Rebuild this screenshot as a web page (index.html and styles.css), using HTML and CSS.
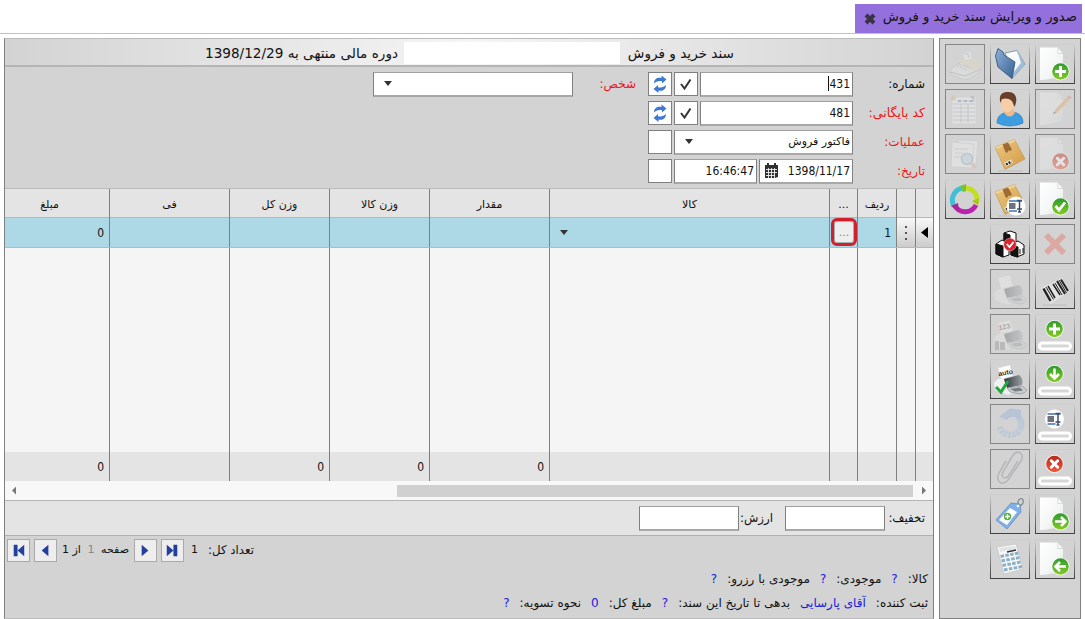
FILE: index.html
```html
<!DOCTYPE html>
<html lang="fa" dir="rtl">
<head>
<meta charset="utf-8">
<title>صدور و ویرایش سند خرید و فروش</title>
<link rel="stylesheet" href="styles.css">
</head>
<body>
<svg class="defs" aria-hidden="true">
  <defs>
    <linearGradient id="gPage" x1="0" y1="0" x2="1" y2="1"><stop offset="0" stop-color="#fff"/><stop offset=".6" stop-color="#f4f6f6"/><stop offset="1" stop-color="#d5d9da"/></linearGradient>
    <linearGradient id="gGreen" x1="0" y1="0" x2="0" y2="1"><stop offset="0" stop-color="#2f9a2f"/><stop offset="1" stop-color="#86cc25"/></linearGradient>
    <linearGradient id="gRed" x1="0" y1="0" x2="0" y2="1"><stop offset="0" stop-color="#b92a1e"/><stop offset="1" stop-color="#ee5a3c"/></linearGradient>
    <linearGradient id="gBlue" x1="0" y1="0" x2="1" y2="1"><stop offset="0" stop-color="#8fb2d8"/><stop offset="1" stop-color="#36608f"/></linearGradient>
    <linearGradient id="gBox" x1="0" y1="0" x2="1" y2="1"><stop offset="0" stop-color="#ecc884"/><stop offset="1" stop-color="#d29c45"/></linearGradient>
    <linearGradient id="gInk" x1="0" y1="0" x2="1" y2="0"><stop offset="0" stop-color="#30353b"/><stop offset="1" stop-color="#9aa0a5"/></linearGradient>
    <g id="page"><path d="M5 3.5H23L28 9V32Q20 35 5 36Z" fill="url(#gPage)"/><path d="M23 3.5V9.5H28Z" fill="#fff" stroke="#bfc3c4" stroke-width=".6"/></g>
    <g id="ok"><circle r="9" fill="#fff"/><circle r="8.3" fill="url(#gGreen)"/></g>
    <g id="no"><circle r="9" fill="#fff"/><circle r="8.3" fill="url(#gRed)"/><path d="M-3.2-3.2L3.2 3.2M3.2-3.2L-3.2 3.2" stroke="#fff" stroke-width="3" stroke-linecap="round"/></g>
    <g id="plus"><use href="#ok"/><path d="M0-5.5V5.5M-5.5 0H5.5" stroke="#fff" stroke-width="3"/></g>
    <g id="field"><rect x="4.500" y="29" width="31" height="6" rx="3" fill="#d6d6d6" stroke="#fff" stroke-width="3"/></g>
    <g id="clamp"><circle r="9.500" fill="#fff"/><rect x="-7" y="-3" width="6.500" height="6" fill="#6c7280"/><path d="M-7-5H6M-7 5H1" stroke="#6e93cc" stroke-width="2"/><path d="M3.5-6V6.500M1-5.500H6M1 3H6M2 6H5" stroke="#3b516f" stroke-width="1.500"/></g>
    <g id="box"><path d="M8 37H33" stroke="#bdbdbd"/><path d="M5 13L24.5 5.500L35 25L15 35.500Z" fill="url(#gBox)" stroke="#bb873a" stroke-width=".5"/><path d="M5 13L24.500 5.500L25.500 7.500L6.500 15Z" fill="#f0d295"/><path d="M12.500 10.500L18 8.500L22 15.500L20 17L18.500 16.500L17 19L15.500 18Z" fill="#9d6b33"/><path d="M14 29L21 25.500L23 28.500L16.500 32.500Z" fill="#f5f2ea"/><path d="M16 30.500L21.500 27.500" stroke="#292929" stroke-width="2.500" stroke-dasharray="2 1"/></g>
    <g id="printer"><path d="M4 24L8 20L15 19L27 27L25 33L18 36L5 31Z" fill="#f0f1f2"/><path d="M14 20L29 16Q34 20 32 26L17 29Q15 24 14 20Z" fill="url(#gInk)"/><path d="M17 29L32 27L37 31Q36 34 30 35L20 33Z" fill="#c9cdcf" stroke="#8d9397" stroke-width=".7"/><path d="M20 30L30 28.500L33 31.500L25 32.500Z" fill="#777e84"/><path d="M8 9L20 6L23 17L11 20Z" fill="#fff" stroke="#d5d5d5" stroke-width=".4"/></g>
    <g id="refresh" fill="#3f78d2"><path d="M1 8C1 3.500 4.500 1.500 8.500 2.500V0L13.500 4L9 8V5.800C5.500 5 3 6 1 8Z"/><path d="M13 9.500C13 14 9.500 16 5.500 15V17.500L.5 13.500L5 9.500V11.700C8.500 12.500 11 11.500 13 9.500Z"/></g>
  </defs>
</svg>

<header class="tabs"><div class="tab"><span>صدور و ویرایش سند خرید و فروش</span>
  <svg class="tab-close" viewBox="0 0 12 12"><path d="M2 2L10 10M10 2L2 10" stroke="#393345" stroke-width="4"/></svg></div></header>

<div class="workspace">
  <aside class="toolbar">
    <div class="tools">
      <button class="tool"><svg viewBox="0 0 40 40"><use href="#page"/><use href="#plus" x="25.500" y="27.500"/></svg></button>
      <button class="tool off"><svg viewBox="0 0 40 40"><use href="#page"/><path d="M18 25L20 21L32 8L35 10L22 24Z" fill="#e99a45"/><path d="M32 8L34 6L37 8.500L35 10Z" fill="#d46f6f"/><path d="M18 25L19 22.500L21 24Z" fill="#333"/></svg></button>
      <button class="tool off stop"><svg viewBox="0 0 40 40"><use href="#page" opacity=".7"/><use href="#no" x="25.500" y="27.500"/></svg></button>
      <button class="tool"><svg viewBox="0 0 40 40"><use href="#page"/><use href="#ok" x="25.500" y="27.500"/><path d="M20.500 27L24 31L30 23.500" fill="none" stroke="#fff" stroke-width="2.800"/></svg></button>
      <button class="tool off stop"><svg viewBox="0 0 40 40"><path d="M9 13L13 9L20 16L27 9L31 13L24 20L31 27L27 31L20 24L13 31L9 27L16 20Z" fill="#e86a60"/></svg></button>
      <button class="tool"><svg viewBox="0 0 40 40"><path d="M8 36H32" stroke="#bbb"/><path d="M6 19L27 9L34 23L15 35Z" fill="#e3e3e3"/><g stroke="#222"><path d="M8.500 19.500L15.500 32" stroke-width="2.500"/><path d="M11 18L18.500 30.500M20 14L27 26" stroke-width="1"/><path d="M13 17L20 29M18 15L25 26" stroke-width="1.500"/><path d="M22 12L30 25M26 10.500L33 22" stroke-width="2"/><path d="M24 11L31.500 24" stroke-width="1"/></g></svg></button>
      <button class="tool"><svg viewBox="0 0 40 40"><use href="#plus" x="19.500" y="15"/><use href="#field"/></svg></button>
      <button class="tool"><svg viewBox="0 0 40 40"><use href="#ok" x="19.500" y="15"/><path d="M19.500 9.500V19M15 15L19.500 19.500L24 15" fill="none" stroke="#fff" stroke-width="2.500"/><use href="#field"/></svg></button>
      <button class="tool"><svg viewBox="0 0 40 40"><use href="#clamp" x="19.500" y="15"/><use href="#field"/></svg></button>
      <button class="tool"><svg viewBox="0 0 40 40"><use href="#no" x="19.500" y="15"/><use href="#field"/></svg></button>
      <button class="tool"><svg viewBox="0 0 40 40"><use href="#page"/><use href="#ok" x="25.500" y="27.500"/><path d="M20 27.500H29M26 23L30.500 27.500L26 32" fill="none" stroke="#fff" stroke-width="2.600"/></svg></button>
      <button class="tool"><svg viewBox="0 0 40 40"><use href="#page"/><use href="#ok" x="25.500" y="27.500"/><path d="M31 27.500H22M25 23L20.500 27.500L25 32" fill="none" stroke="#fff" stroke-width="2.600"/></svg></button>
    </div>
    <div class="tools">
      <button class="tool"><svg viewBox="0 0 40 40"><path d="M15 9L27 6.500L35 20L22 34.500L19 18Z" fill="url(#gPage)" stroke="#64839f" stroke-width=".8"/><path d="M27 6.500L35 20L22 34.500L22 30L31 19Z" fill="#9fbcd9"/><path d="M5.500 12L8 4.500L13 8L14 11L25 18L22 34.500L8 23Z" fill="url(#gBlue)" stroke="#345780" stroke-width=".9"/></svg></button>
      <button class="tool"><svg viewBox="0 0 40 40"><path d="M7 34C7 26 13 24 17 23H23C29 24 33 27 33 34Q20 40 7 34Z" fill="#3d9de0" stroke="#2477b5" stroke-width=".6"/><path d="M15 20H23L25 24Q20 31 14 24Z" fill="#edb98d"/><ellipse cx="17.500" cy="14.500" rx="6.500" ry="9" fill="#f6cda5"/><path d="M10.500 14C8 5 13 3 18 3C27 3 28 11 24.500 18L22 12C19 9 15 9 12 10Z" fill="#66402c"/></svg></button>
      <button class="tool"><svg viewBox="0 0 40 40"><use href="#box"/></svg></button>
      <button class="tool"><svg viewBox="0 0 40 40"><use href="#box"/><use href="#clamp" x="26" y="27"/></svg></button>
      <button class="tool"><svg viewBox="0 0 40 40"><g stroke="#111" stroke-width="1" stroke-linejoin="round"><path d="M14 9L20 7L26 9V18L20 21L14 18Z" fill="#fff"/><path d="M14 9L20 11V21L14 18Z" fill="#111"/><path d="M6 20L12 16L19 20V31L13 33L6 30Z" fill="#fff"/><path d="M6 20L13 22V33L6 30Z" fill="#111"/><path d="M21 20L28 17L34 21V30L27 33L21 31Z" fill="#fff"/><path d="M21 20L28 23V33L21 31Z" fill="#111"/><path d="M30 25V30M33 24V29"/></g><circle cx="20" cy="20.500" r="6.300" fill="#db2631" stroke="#f7c2c4" stroke-width=".5"/><path d="M16.800 20L19.500 23L23.500 18" fill="none" stroke="#fff" stroke-width="1.800"/></svg></button>
      <button class="tool off"><svg viewBox="0 0 40 40"><use href="#printer"/></svg></button>
      <button class="tool off"><svg viewBox="0 0 40 40"><use href="#printer"/><text class="paper" x="9" y="16" transform="rotate(-10 10 16)">123</text><path d="M5 27H9V36H5ZM10 28H15V36H10Z" fill="#777"/></svg></button>
      <button class="tool"><svg viewBox="0 0 40 40"><use href="#printer"/><text class="paper" x="8.500" y="17" transform="rotate(-10 10 16)">auto</text><path d="M6 28L11 33L18 22" fill="none" stroke="#24a83a" stroke-width="3"/></svg></button>
      <button class="tool off"><svg viewBox="0 0 40 40"><path d="M28 12A11 11 0 1 1 9.500 22" fill="none" stroke="#8cb3e3" stroke-width="6.500" stroke-dasharray="15 1 4 1 3 1 3 1 3 1 3 1 3 1"/><path d="M9 13L20 4.500L31 6L31 17L25 13Q20 12 17 16Z" fill="#6f9fdf"/></svg></button>
      <button class="tool off"><svg viewBox="0 0 40 40"><path d="M16 12L9 24C5 32 12 38 18 31L31 12C35 5 28 0 23 6L13 23C10 29 16 31 19 26L28 12" fill="none" stroke="#666c72" stroke-width="1.500"/></svg></button>
      <button class="tool"><svg viewBox="0 0 40 40"><path d="M28 10C27 3 35 3 33 9Q31 13 27 12" fill="none" stroke="#858b8d" stroke-width="1.300"/><path d="M6 26L21 9L30 10L31 18L17 35Z" fill="#7fb0e8" stroke="#5381b7" stroke-width=".6"/><path d="M9 26L20 14L27 18L17 31Z" fill="#fff"/><circle cx="17.500" cy="22.500" r="3.700" fill="#53b13c"/><path d="M17.500 20V25M15 22.500H20" stroke="#fff" stroke-width="1.300"/><circle cx="28" cy="12" r="1.300" fill="#fff"/></svg></button>
      <button class="tool"><svg viewBox="0 0 40 40"><path d="M7 8L26 5L33 30L14 35Z" fill="#f8f8f8" stroke="#c2c5c6" stroke-width=".7"/><path d="M9 9L25 7L26 10L10 13Z" fill="#e0e4e4"/><path d="M17 13L26 11" stroke="#333" stroke-width="1.400"/><g stroke="#8db0c6" stroke-width="3" stroke-dasharray="3.600 1.300"><path d="M10.500 17.500L28.500 14M11.500 22L29.500 18.500M12.500 26.500L31 23M14 31L32 27.500"/></g></svg></button>
    </div>
    <div class="tools">
      <button class="tool off"><svg viewBox="0 0 40 40"><path d="M5 26L17 17L35 25L34 29L20 36L5 30Z" fill="#eee" stroke="#9fa6ae" stroke-width=".7"/><path d="M14 17L22 13L34 17V25L27 27Z" fill="#e5d9b4"/><path d="M5 28L20 32L34 26" fill="none" stroke="#8493a2"/><path d="M18 9L26 8V15L20 16Z" fill="#fff"/><path d="M19 10H23L24 14" fill="none" stroke="#aaa"/><path d="M12 22L22 26M14 20L25 24" stroke="#9298a0" stroke-dasharray="2 1"/></svg></button>
      <button class="tool off"><svg viewBox="0 0 40 40"><path d="M7 8H31V35H7Z" fill="#fff" stroke="#c1c5cc" stroke-width=".6"/><path d="M12 12H30M8 15H30M8 19H30M8 23H30M8 27H30M8 31H30M16 15V34M23 15V34" stroke="#9da7b6"/><path d="M13 12H28" stroke="#466ca0" stroke-width="2" stroke-dasharray="3 3"/><path d="M5 10L8 6L12 9L8 12Z" fill="#d9b177"/><path d="M25 8L30 11L28 7Z" fill="#777"/></svg></button>
      <button class="tool off"><svg viewBox="0 0 40 40"><path d="M13 6L33 7L31 30L10 28Z" fill="#fff" stroke="#a3bdcf" stroke-width=".7"/><path d="M7 8L29 10L27 34L6 33Z" fill="#fff" stroke="#a9b8c1" stroke-width=".7"/><path d="M10 15H23M10 19H19M9 23H18" stroke="#aebecf"/><circle cx="22" cy="25" r="5.500" fill="#bddaf4" stroke="#7ea5cf" stroke-width="1.500"/><path d="M26 29L31 34" stroke="#e1ac60" stroke-width="2.500"/></svg></button>
      <button class="tool"><svg viewBox="0 0 40 40"><g fill="none" stroke-width="5"><path d="M20 9A11.500 11.500 0 0 1 31 25" stroke="#c4de24"/><path d="M31 26A12 12 0 0 1 10 27" stroke="#bc22b0"/><path d="M9 27A12 12 0 0 1 19 9" stroke="#43bed7"/></g><path d="M15 7L21 5V12L18 13Z" fill="#77c335"/><path d="M33 26L27 22L34 19Z" fill="#a8c51d"/><path d="M6 27L13 24L14 33Z" fill="#a52795"/></svg></button>
    </div>
  </aside>

  <main class="document">
    <div class="heading"><span class="doc-name">سند خرید و فروش</span><span class="blank"></span><span class="period">دوره مالی منتهی به 1398/12/29</span></div>
    <form class="form">
      <div class="column main-fields">
        <div class="row"><label>شماره:</label><div class="input grow caret">431</div><div class="mini"><svg viewBox="0 0 22 22"><path d="M6 11L9.500 15.500L15.500 6.500" fill="none" stroke="#333" stroke-width="2"/></svg></div><div class="mini"><svg viewBox="0 0 22 22"><use href="#refresh" x="4" y="2.500"/></svg></div></div>
        <div class="row"><label class="required wide">کد بایگانی:</label><div class="input grow">481</div><div class="mini"><svg viewBox="0 0 22 22"><path d="M6 11L9.500 15.500L15.500 6.500" fill="none" stroke="#333" stroke-width="2"/></svg></div><div class="mini"><svg viewBox="0 0 22 22"><use href="#refresh" x="4" y="2.500"/></svg></div></div>
        <div class="row"><label class="required">عملیات:</label><div class="input grow select fa">فاکتور فروش<i class="down"></i></div><div class="mini"></div></div>
        <div class="row"><label class="required">تاریخ:</label><div class="input date"><span>1398/11/17</span><svg class="calendar" viewBox="0 0 15 16"><path d="M1 2H14V14L11 15H1Z" fill="#303030"/><path d="M2 6.500H13M2 9.500H13M2 12.500H11M4.500 5V15M7.500 5V15M10.500 5V15" stroke="#eee" stroke-width=".9"/><path d="M4 0V3M11 0V3" stroke="#303030" stroke-width="2"/></svg></div><div class="input grow">16:46:47</div><div class="mini"></div></div>
      </div>
      <div class="column person"><div class="row"><label class="required">شخص:</label><div class="input person-input select"><i class="down"></i></div></div></div>
    </form>
    <section class="grid">
      <div class="grid-row head"><b></b><b></b><b>ردیف</b><b>...</b><b>کالا</b><b>مقدار</b><b>وزن کالا</b><b>وزن کل</b><b>فی</b><b class="sum">مبلغ</b></div>
      <div class="grid-row current"><b class="handle"><i class="pointer"></i></b><b class="handle"><svg class="dots" viewBox="0 0 4 16"><path d="M1 1H3V3H1ZM1 7H3V9H1ZM1 13H3V15H1Z"/></svg></b><b class="num">1</b><b class="pick"><span class="more">...</span></b><b class="product"><i class="down"></i></b><b></b><b></b><b></b><b></b><b class="num">0</b></div>
      <div class="grid-row blank-row"><b></b><b></b><b></b><b></b><b></b><b></b><b></b><b></b><b></b><b></b></div>
      <div class="grid-row totals"><b></b><b></b><b></b><b></b><b></b><b class="num">0</b><b class="num">0</b><b class="num">0</b><b></b><b class="num">0</b></div>
      <div class="scroll"><i class="arrow right"></i><div class="thumb"></div><i class="arrow left"></i></div>
    </section>
    <div class="amounts"><label>تخفیف:</label><div class="input amount"></div><label class="worth">ارزش:</label><div class="input amount"></div></div>
    <div class="pager">
      <span class="total">تعداد کل:</span><span class="count">1</span>
      <button class="nav"><svg viewBox="0 0 22 22"><path d="M5 5L12 11L5 17ZM12 5H16V17H12Z"/></svg></button>
      <button class="nav"><svg viewBox="0 0 22 22"><path d="M7 5L14 11L7 17Z"/></svg></button>
      <span class="pages"><span>صفحه</span><em>1</em><span>از 1</span></span>
      <button class="nav"><svg viewBox="0 0 22 22"><path d="M14 5L7 11L14 17Z"/></svg></button>
      <button class="nav"><svg viewBox="0 0 22 22"><path d="M17 5L10 11L17 17ZM6 5H10V17H6Z"/></svg></button>
    </div>
    <footer class="status">
      <div class="status-line"><span>کالا:</span><em>?</em><span>موجودی:</span><em>?</em><span>موجودی با رزرو:</span><em>?</em></div>
      <div class="status-line"><span>ثبت کننده:</span><em>آقای پارسایی</em><span>بدهی تا تاریخ این سند:</span><em>?</em><span>مبلغ کل:</span><em>0</em><span>نحوه تسویه:</span><em>?</em></div>
    </footer>
  </main>
</div>
</body>
</html>
```
FILE: styles.css
```css
* { box-sizing: border-box; }
body { margin: 0; width: 1085px; height: 619px; overflow: hidden; background: #fff; color: #111; font: 12px/16px "DejaVu Sans", sans-serif; }
button { padding: 0; margin: 0; border-radius: 0; }
b, em, i { font-weight: normal; font-style: normal; }
.defs { display: block; width: 0; height: 0; }
.tabs { height: 34px; padding: 4px 3px 0 0; border-bottom: 1px solid #c6bfc9; }
.tab { width: 227px; height: 29px; padding: 0 5px 4px 0; background: #9370db; display: flex; align-items: center; gap: 7px; font-size: 13.2px; white-space: nowrap; }
.tab-close { width: 12px; height: 12px; margin-top: 5px; flex: none; }
.workspace { display: flex; gap: 5px; height: 581px; margin: 4px 4px 0; }
.toolbar { width: 142px; height: 581px; border: 1px solid #808080; padding: 5px; display: flex; gap: 5px; background: #d3d3d3; }
.document { width: 930px; height: 581px; border: 1px solid #808080; border-top-color: #bbb; border-bottom-color: #bbb; display: flex; flex-direction: column; background: #d3d3d3; }
.tools { width: 40px; display: flex; flex-direction: column; gap: 5px; }
.tool { width: 40px; height: 40px; background: #d3d3d3; border: 1px solid; border-image: linear-gradient(#d0d0d0, #404040) 1; }
.tool svg { display: block; width: 40px; height: 40px; margin: -1px; }
.tool.off { border: 1px solid #858585; border-image: none; }
.off svg { opacity: .28; }
.stop svg { opacity: .4; }
.paper { font: bold 7px "Liberation Sans", sans-serif; direction: ltr; fill: #333; }
.heading { flex: 0 0 28px; border-bottom: 2px solid #b5b5b5; background: linear-gradient(90deg, #d3d3d3, #f5f5f5 50%, #d3d3d3); display: flex; align-items: center; padding: 2px 199px 0 0; font-size: 13.6px; line-height: 20px; white-space: nowrap; }
.doc-name { width: 114px; }
.blank { width: 216px; height: 22px; background: #fff; }
.period { margin-right: 6px; }
.form { flex: 0 0 121px; display: flex; padding: 5px 8px 0 0; }
.column { display: flex; flex-direction: column; gap: 4px; }
.main-fields { width: 277px; }
.row { display: flex; gap: 2px; height: 25px; }
.row label { width: 70px; padding-top: 4px; white-space: nowrap; }
.required { color: #f01414; }
.input { height: 25px; background: #fff; border: 1px solid #808080; border-top-color: #a0a0a0; border-bottom: 2px solid #a8a8a8; padding: 3px 2px 0; font-family: "DejaVu Sans Condensed", "DejaVu Sans", sans-serif; white-space: nowrap; display: flex; justify-content: space-between; }
.grow { flex: 1; }
.fa { font: 11px/16px "DejaVu Sans", sans-serif; }
.caret { justify-content: flex-start; }
.caret::after { content: ""; width: 1px; height: 15px; background: #111; }
.mini { width: 24px; height: 24px; border: 1px solid #808080; background: #fff; }
.mini svg { display: block; width: 22px; height: 22px; }
.date { width: 94px; }
.calendar { width: 15px; height: 16px; margin-left: 2px; }
.person { padding-right: 12px; }
.row .wide { font-size: 12.6px; }
.person .row label { width: 63px; }
.person .row { gap: 0; }
.person-input { width: 200px; }
.down { width: 8px; height: 5px; background: #333; clip-path: polygon(0 0, 100% 0, 50% 100%); margin: 5px auto 0 8px; }
.fa .down { margin-right: 0; }
.grid { flex: 0 0 312px; border-top: 1px solid #bbb; background: #f5f5f5; }
.grid-row { display: grid; grid-template-columns: 17px 19px 39px 28px 280px 120px 100px 100px 120px 105px; height: 29px; }
.grid-row > b { border-right: 1px solid #808080; display: flex; align-items: center; justify-content: center; min-width: 0; }
.grid-row > b:first-child { border-right: 0; }
.head { background: #e4e4e4; box-shadow: inset 0 -1px #b8b8b8; font-size: 11px; }
.head > b { padding-top: 2px; }
.head > .sum { padding-right: 15px; }
.current { background: #add8e6; box-shadow: inset 0 -1px #b8b8b8; height: 30px; padding-bottom: 1px; }
.grid-row > .num { justify-content: flex-start; padding-right: 5px; font-family: "DejaVu Sans Condensed", sans-serif; }
.current .handle { background: linear-gradient(#f8f8f8, #ccc); }
.pointer { width: 7px; height: 11px; background: #000; clip-path: polygon(100% 0, 100% 100%, 0 50%); }
.dots { width: 4px; height: 16px; fill: #555; }
.pick { position: relative; }
.more { position: absolute; left: 1px; top: 0; width: 26px; height: 28px; border: 3px solid #d1202b; border-radius: 6px; box-shadow: inset 0 0 0 1px #a5aeb2; background: #eee; color: #888; text-align: center; line-height: 24px; font-size: 11px; }
.product .down { margin: 0 auto 0 10px; }
.blank-row { height: 204px; }
.totals { background: #e4e4e4; padding-top: 0; }
.scroll { height: 19px; background: #f8f8f8; display: flex; align-items: center; padding: 0 7px; }
.arrow { width: 4px; height: 8px; background: #777; }
.right { clip-path: polygon(0 0, 100% 50%, 0 100%); }
.left { clip-path: polygon(100% 0, 0 50%, 100% 100%); margin-right: auto; }
.thumb { width: 516px; height: 12px; margin-right: 9px; background: #d0d0d0; }
.amounts { flex: 0 0 36px; border-top: 1px solid #b5b5b5; border-bottom: 1px solid #b0b0b0; background: #e4e4e4; display: flex; align-items: center; padding-right: 8px; }
.amounts label { width: 40px; font-size: 11.8px; white-space: nowrap; }
.amounts .worth { width: 34px; margin-right: 12px; }
.amount { width: 100px; }
.pager { flex: 0 0 28px; display: flex; align-items: center; justify-content: flex-end; gap: 4px; padding-left: 2px; white-space: nowrap; }
.total { margin-left: 6px; font-size: 11.8px; }
.count { width: 7px; margin-left: 3px; font-size: 11px; }
.nav { width: 23px; height: 23px; border: 1px solid #aaa; background: #eee; flex: none; }
.nav svg { display: block; width: 21px; height: 21px; fill: #233f9b; }
.pages { width: 69px; padding: 0 1px; display: flex; justify-content: space-between; font-size: 11px; }
.pages em { color: #888; }
.status { padding: 3px 5px 0 0; }
.status-line { height: 24px; display: flex; align-items: center; white-space: nowrap; }
.status-line span { margin-left: 10px; }
.status-line em { color: #1818dc; margin-left: 10px; }
```
